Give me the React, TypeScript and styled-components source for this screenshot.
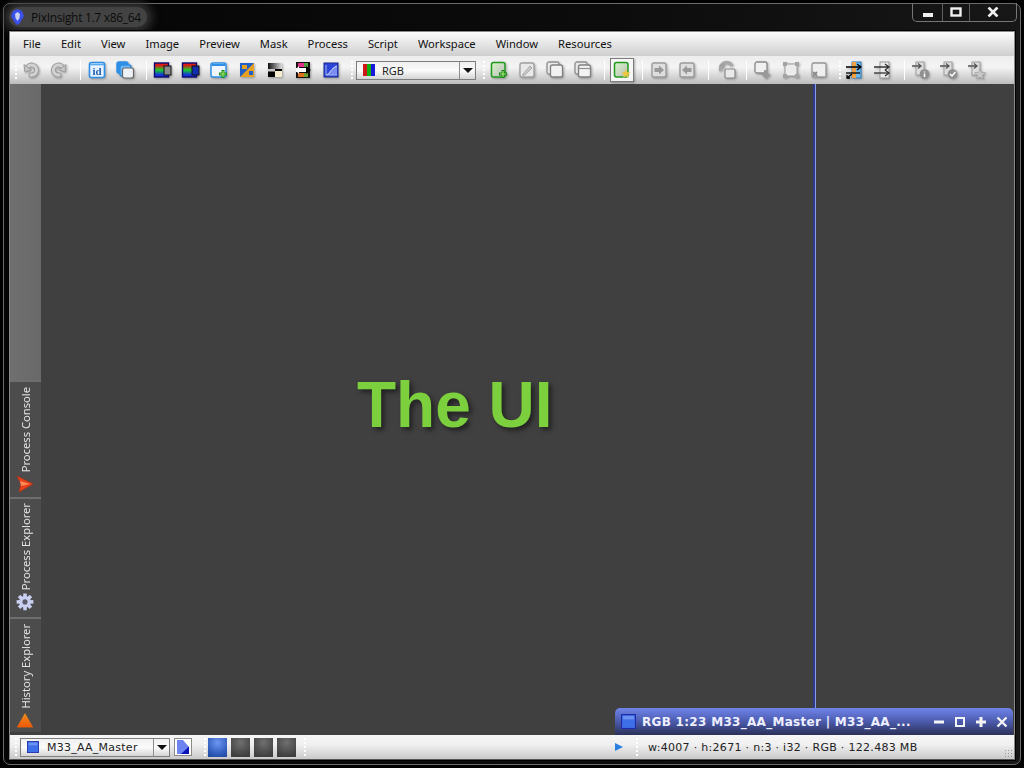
import React from 'react';
import styled, { createGlobalStyle } from 'styled-components';

const GlobalStyle = createGlobalStyle`
    html, body {
        margin: 0;
        width: 1024px;
        height: 768px;
        overflow: hidden;
        background: #000;
    }
    * { box-sizing: border-box; }
`;

// Aero window frame
const Screen = styled.div`
    width: 1024px;
    height: 768px;
    padding: 3px;
    background: #000;
    font-family: "Open Sans", "Noto Sans", sans-serif;
`;

const Frame = styled.div`
    height: 762px;
    display: flex;
    flex-direction: column;
    border: 1px solid #6c6c6c;
    border-radius: 7px;
    padding: 0 5px 4px 5px;
    background: linear-gradient(90deg, #050505, #0c0c0c 60%, #171717);
`;

const TitleBar = styled.div`
    height: 27px;
    flex: none;
    display: flex;
    align-items: flex-start;
    justify-content: space-between;
`;

const TitleLeft = styled.div`
    display: flex;
    align-items: center;
    gap: 7px;
    height: 20px;
    margin-top: 3px;
    padding: 0 6px 0 2px;
    border-radius: 10px;
    background: #434343;
    box-shadow: 0 0 10px 5px #363636;
`;

const TitleText = styled.span`
    font-size: 12px;
    color: #0c0c0c;
    letter-spacing: -0.3px;
`;

const CaptionButtons = styled.div`
    display: flex;
    height: 19px;
    margin-top: -1px;
    margin-right: -2px;
    border: 1px solid #767676;
    border-top: none;
    border-radius: 0 0 5px 5px;
`;

const CaptionButton = styled.div<{ $w: number }>`
    width: ${p => p.$w}px;
    display: flex;
    align-items: center;
    justify-content: center;
    border-left: 1px solid #5f5f5f;
    &:first-child { border-left: none; }
`;

const Client = styled.div`
    flex: 1;
    min-height: 0;
    display: flex;
    flex-direction: column;
    border: 1px solid #8a8a8a;
    border-bottom-color: #555;
    outline: 1px solid #000;
    background: #404040;
`;

const MenuBar = styled.div`
    height: 24px;
    flex: none;
    display: flex;
    align-items: center;
    gap: 20px;
    padding: 0 0 2px 13px;
    background: linear-gradient(#fbfbfb, #cfcfcf);
`;

const MenuItem = styled.span`
    font-family: "Noto Sans", sans-serif;
    font-size: 11.2px;
    color: #111;
`;

const ToolBar = styled.div`
    height: 28px;
    flex: none;
    display: flex;
    align-items: center;
    padding-left: 1px;
    background: linear-gradient(#ededed, #f4f4f4 40%, #bdbdbd);
`;

const Grip = styled.div<{ $ml?: number; $mr?: number }>`
    width: 2px;
    height: 19px;
    flex: none;
    margin-left: ${p => p.$ml ?? 4}px;
    margin-right: ${p => p.$mr ?? 0}px;
    background: repeating-linear-gradient(#fff 0 2px, transparent 2px 4px);
`;

const Sep = styled.div<{ $ml?: number; $mr?: number }>`
    width: 1px;
    height: 20px;
    flex: none;
    margin-left: ${p => p.$ml ?? 7}px;
    margin-right: ${p => p.$mr ?? 2}px;
    background: #fff;
`;

const ToolIcon = styled.div<{ $active?: boolean }>`
    width: 28px;
    height: 24px;
    flex: none;
    display: flex;
    align-items: center;
    justify-content: center;
    filter: drop-shadow(1px 1px 1px rgba(0, 0, 0, 0.3));
    ${p => p.$active && `
        width: 24px;
        background: #f6f6f6;
        border: 1px solid #7c7c7c;
    `}
`;

const Combo = styled.div<{ $w: number; $arrow: number }>`
    width: ${p => p.$w}px;
    height: 19px;
    flex: none;
    display: grid;
    grid-template-columns: 1fr ${p => p.$arrow}px;
    border: 1px solid #7d7d7d;
    background: linear-gradient(#f0f0f0, #fbfbfb 50%, #d4d4d4);
`;

const ComboLabel = styled.div<{ $gap: number; $view?: boolean }>`
    display: flex;
    align-items: center;
    gap: ${p => p.$gap}px;
    padding-left: 6px;
    font-family: ${p => (p.$view ? '"DejaVu Sans"' : '"Noto Sans"')}, sans-serif;
    font-size: 11px;
    letter-spacing: ${p => (p.$view ? '0.25px' : '0')};
    color: #222;
`;

const ComboArrow = styled.div`
    display: flex;
    align-items: center;
    justify-content: center;
    border-left: 1px solid #8d8d8d;
    &::after {
        content: '';
        border-left: 5px solid transparent;
        border-right: 5px solid transparent;
        border-top: 5px solid #111;
    }
`;

const Middle = styled.div`
    flex: 1;
    min-height: 0;
    display: flex;
    position: relative;
`;

const SideBar = styled.div`
    width: 31px;
    flex: none;
    display: flex;
    flex-direction: column;
    padding-bottom: 3px;
    background: #404040;
`;

const SideFill = styled.div`
    flex: 1;
    background: linear-gradient(90deg, #6f6f6f, #696969);
`;

const SideTab = styled.div<{ $h: number; $pb: number }>`
    height: ${p => p.$h}px;
    flex: none;
    display: flex;
    flex-direction: column-reverse;
    align-items: center;
    gap: 3px;
    padding: 4px 1px ${p => p.$pb}px 0;
    background: #4c4c4c;
    border-top: 2px solid #6e6e6e;
    &:first-of-type { border-top: none; }
`;

const SideLabel = styled.span`
    writing-mode: vertical-rl;
    transform: rotate(180deg);
    white-space: nowrap;
    font-family: "Noto Sans", sans-serif;
    font-size: 11.2px;
    line-height: 14px;
    margin-left: 1px;
    color: #e4e4e4;
`;

const Workspace = styled.div`
    flex: 1;
    padding: 285px 0 0 316px;
    background: #404040;
`;

const Headline = styled.h1`
    margin: 0;
    font-family: "Liberation Sans", Arial, sans-serif;
    font-size: 64px;
    line-height: 72px;
    font-weight: 700;
    color: #7cd03e;
    text-shadow: 3px 3px 5px rgba(0, 0, 0, 0.5);
`;

const GuideLine = styled.div`
    position: absolute;
    left: 803px;
    top: 0;
    bottom: 27px;
    width: 3px;
    background: linear-gradient(90deg, #2c3c8c 0 2px, #8d9be6 2px);
`;

const ViewTitle = styled.div`
    position: absolute;
    right: 1px;
    bottom: 0;
    width: 398px;
    height: 27px;
    display: flex;
    align-items: center;
    padding: 0 4px 0 6px;
    border-radius: 5px 5px 0 0;
    background: linear-gradient(#7185ea, #4f5fb4 45%, #2b3158);
`;

const ViewName = styled.span`
    flex: 1;
    margin-left: 6px;
    font-family: "DejaVu Sans", sans-serif;
    font-size: 12px;
    font-weight: 700;
    letter-spacing: 0.3px;
    color: #eef0ff;
    white-space: nowrap;
`;

const ViewButtons = styled.div`
    display: flex;
    gap: 7px;
`;

const StatusBar = styled.div`
    height: 24px;
    flex: none;
    display: flex;
    align-items: center;
    padding-left: 1px;
    position: relative;
    background: linear-gradient(#f6f6f6, #f0f0f0 40%, #c9c9c9);
`;

const ViewMode = styled.div<{ $on?: boolean }>`
    width: 19px;
    height: 19px;
    flex: none;
    margin-right: 4px;
    background: ${p => p.$on
        ? 'radial-gradient(circle at 50% 25%, #6f97f2, #2c58b8 70%, #24479a)'
        : 'radial-gradient(circle at 50% 25%, #6f6f6f, #3f3f3f 80%)'};
`;

const SquareButton = styled.div`
    width: 18px;
    height: 18px;
    flex: none;
    margin-left: 4px;
    display: flex;
    align-items: center;
    justify-content: center;
    background: #fff;
    border: 1px solid #8a8a8a;
`;

const StatusRight = styled.div`
    margin-left: auto;
    width: 398px;
    display: flex;
    align-items: center;
`;

const StatusText = styled.span`
    font-family: "DejaVu Sans", sans-serif;
    font-size: 11px;
    letter-spacing: 0.3px;
    color: #222;
    margin-left: 10px;
    white-space: nowrap;
`;

const PlayArrow = styled.div`
    width: 0;
    height: 0;
    margin-left: -1px;
    margin-right: 10px;
    border-top: 4px solid transparent;
    border-bottom: 4px solid transparent;
    border-left: 8px solid #2a7fe0;
`;

const ResizeGrip = styled.div`
    position: absolute;
    right: 1px;
    bottom: 1px;
    width: 9px;
    height: 9px;
    background: radial-gradient(circle, #9a9a9a 1px, transparent 1px) 0 0 / 3px 3px;
`;

// ---- icon drawings ----
const Svg = ({ children, size = 20 }: { children: React.ReactNode; size?: number }) => (
    <svg width={size} height={size} viewBox="0 0 20 20">{children}</svg>
);

const AppLogo = () => (
    <svg width="13" height="16" viewBox="0 0 13 16">
        <path d="M6.5 0 L11 2 L13 7 L9 14 L6.5 16 L4 14 L0 7 L2 2 Z" fill="#3a50e8" />
        <path d="M6.5 3 L9 5 L8.5 9 L6.5 12 L4.5 9 L4 5 Z" fill="#c8d2f4" />
    </svg>
);

const Undo = ({ flip }: { flip?: boolean }) => (
    <Svg>
        <g transform={flip ? 'translate(20,0) scale(-1,1)' : undefined} fill="none" strokeLinecap="round">
            <path d="M6 8 A5 5 0 1 1 10 15" stroke="#9c9c9c" strokeWidth="5" />
            <path d="M6 8 A5 5 0 1 1 10 15" stroke="#d2d2d2" strokeWidth="3" />
            <path d="M3 5 L4 12 L10 10 Z" fill="#c4c4c4" stroke="#9c9c9c" />
        </g>
    </Svg>
);

const IdIcon = () => (
    <Svg>
        <rect x="2.5" y="2.5" width="15" height="15" rx="2" fill="#e8f3ff" stroke="#2f8fe6" strokeWidth="1.6" />
        <path d="M3 4.5 H17" stroke="#5aaaf0" strokeWidth="1.6" />
        <text x="10" y="15" textAnchor="middle" fontFamily="Liberation Serif, serif" fontSize="11" fontWeight="700" fill="#1f5fb0">id</text>
    </Svg>
);

const Windows = () => (
    <Svg>
        <rect x="2" y="2" width="11" height="11" rx="2" fill="#2f8fe6" stroke="#2f8fe6" strokeWidth="1.5" />
        <rect x="5" y="5" width="11" height="11" rx="2" fill="#6fb8f4" stroke="#2f8fe6" strokeWidth="1.5" />
        <rect x="7.5" y="8" width="11" height="10" rx="2" fill="#eef2f6" stroke="#666" strokeWidth="1.2" />
    </Svg>
);

const Channels = ({ tail }: { tail: string }) => (
    <Svg>
        <defs>
            <linearGradient id="rg" x1="0" y1="0" x2="0" y2="1">
                <stop offset="0.15" stopColor="#e01818" />
                <stop offset="0.5" stopColor="#18d028" />
                <stop offset="0.85" stopColor="#1830e0" />
            </linearGradient>
        </defs>
        <rect x="1.5" y="3" width="14" height="14" fill="url(#rg)" stroke="#0a0a70" strokeWidth="1.4" />
        <rect x="11" y="6" width="7" height="9" fill={tail} stroke="#111" />
    </Svg>
);

const NewPreview = () => (
    <Svg>
        <rect x="2" y="3" width="15" height="14" rx="2" fill="#eef5fc" stroke="#2f8fe6" strokeWidth="1.5" />
        <path d="M3 5 H16" stroke="#2f8fe6" strokeWidth="2" />
        <path d="M14 10 V18 M10 14 H18" stroke="#168a16" strokeWidth="3" />
        <path d="M14 11 V17 M11 14 H17" stroke="#9be86b" strokeWidth="1.2" />
    </Svg>
);

const Transfer = () => (
    <Svg>
        <rect x="3" y="3" width="14" height="14" fill="#1f5fc8" />
        <path d="M3 17 L17 3 V17 Z" fill="#e8a020" />
        <path d="M5 5 H10 V9 H5 Z" fill="#e8a020" />
        <path d="M12 11 H16 V15 H12 Z" fill="#1f5fc8" />
    </Svg>
);

const BlackWhite = () => (
    <Svg>
        <defs>
            <linearGradient id="bw" x1="0" y1="0" x2="1" y2="0">
                <stop offset="0" stopColor="#111" />
                <stop offset="1" stopColor="#ddd" />
            </linearGradient>
        </defs>
        <rect x="3" y="3" width="14" height="14" fill="#000" />
        <rect x="3" y="3" width="14" height="6" fill="url(#bw)" />
        <rect x="3" y="9" width="7" height="2.5" fill="#c8c8c8" />
        <rect x="10" y="11" width="7" height="6" fill="#f6ecd0" />
    </Svg>
);

const Histogram = () => (
    <Svg>
        <rect x="3" y="2" width="14" height="16" fill="#111" />
        <rect x="5" y="3" width="6" height="4" fill="#e0308a" />
        <rect x="11" y="3" width="4" height="4" fill="#50a040" />
        <rect x="5" y="13" width="6" height="4" fill="#e07020" />
        <rect x="11" y="13" width="4" height="4" fill="#70a030" />
        <rect x="3" y="8" width="11" height="4" fill="#fff" />
        <path d="M6 6 L2 10 L6 14 Z" fill="#fff" />
        <path d="M13 6 L18 10 L13 14 Z" fill="#000" />
    </Svg>
);

const Curve = () => (
    <Svg>
        <rect x="3" y="3" width="14" height="14" fill="#2a45d8" stroke="#182a90" />
        <path d="M5 15 C9 14 10 8 16 6 V15 Z" fill="#7a8cf0" />
        <path d="M5 15 C9 14 10 8 16 6" stroke="#d8defa" fill="none" />
        <path d="M5 5 V15 H16" stroke="#a8b4f4" fill="none" />
    </Svg>
);

const RgbSwatch = () => (
    <svg width="12" height="12" viewBox="0 0 12 12">
        <rect width="4" height="12" fill="#d01818" />
        <rect x="4" width="4" height="12" fill="#10b010" />
        <rect x="8" width="4" height="12" fill="#1818d8" />
    </svg>
);

const GreenNew = ({ star }: { star?: boolean }) => (
    <Svg>
        <defs>
            <linearGradient id="gn" x1="0" y1="0" x2="1" y2="1">
                <stop offset="0" stopColor="#d8f5c8" />
                <stop offset="1" stopColor="#bcbcbc" />
            </linearGradient>
        </defs>
        <rect x="2.5" y="2.5" width="13.5" height="14.5" rx="2" fill="url(#gn)" stroke="#1f9a1f" strokeWidth="1.5" />
        {star
            ? <path d="M14 9 L15.4 12 L18.5 12.4 L16.2 14.5 L16.9 17.8 L14 16.2 L11.1 17.8 L11.8 14.5 L9.5 12.4 L12.6 12 Z" fill="#ecc640" />
            : <>
                <path d="M14 10 V18 M10 14 H18" stroke="#148214" strokeWidth="3" />
                <path d="M14 11 V17 M11 14 H17" stroke="#a8ec78" strokeWidth="1.2" />
            </>}
    </Svg>
);

const Edit = () => (
    <Svg>
        <rect x="3" y="3" width="14" height="14" rx="2" fill="#e8e8e8" stroke="#a0a0a0" strokeWidth="1.4" />
        <path d="M6 14 L13 6 L15 8 L8 15 L5.5 15.5 Z" fill="#c8c8c8" stroke="#9a9a9a" strokeWidth="0.7" />
    </Svg>
);

const Stack = ({ bar }: { bar?: boolean }) => (
    <Svg>
        <rect x="2" y="2" width="12" height="12" rx="2" fill="#e8e8e8" stroke="#909090" strokeWidth="1.3" />
        <rect x="5.5" y="5" width="12" height="12" rx="2" fill="#f2f2f2" stroke="#808080" strokeWidth="1.3" />
        {bar && <path d="M6 8.5 H17" stroke="#909090" strokeWidth="1.2" />}
    </Svg>
);

const ArrowBox = ({ flip }: { flip?: boolean }) => (
    <Svg>
        <g transform={flip ? undefined : 'translate(20,0) scale(-1,1)'}>
            <rect x="3" y="3" width="14" height="14" rx="2" fill="#dedede" stroke="#9c9c9c" strokeWidth="1.4" />
            <path d="M5.5 8 H10 V5.5 L15 10 L10 14.5 V12 H5.5 Z" fill="#999" />
        </g>
    </Svg>
);

const Refresh = () => (
    <Svg>
        <path d="M4 11 A6 6 0 0 1 15 6" fill="none" stroke="#a8a8a8" strokeWidth="3.5" />
        <path d="M2 5 L8 3 L7 9 Z" fill="#a0a0a0" />
        <rect x="8" y="9" width="10" height="9" rx="1.5" fill="#e8e8e8" stroke="#8a8a8a" strokeWidth="1.2" />
    </Svg>
);

const BoxDown = () => (
    <Svg>
        <rect x="2" y="2" width="12" height="11" rx="2" fill="#f0f0f0" stroke="#8a8a8a" strokeWidth="1.3" />
        <path d="M11 10 H15 V14 H18 L13 19 L8 14 H11 Z" fill="#9a9a9a" />
    </Svg>
);

const Corners = () => (
    <Svg>
        <rect x="4" y="4" width="12" height="12" fill="#ececec" stroke="#9a9a9a" />
        <g fill="#a4a4a4">
            <rect x="2" y="2" width="4" height="4" />
            <rect x="14" y="2" width="4" height="4" />
            <rect x="2" y="14" width="4" height="4" />
            <rect x="14" y="14" width="4" height="4" />
        </g>
    </Svg>
);

const BoxCheck = () => (
    <Svg>
        <rect x="3" y="3" width="14" height="14" rx="1.5" fill="#efefef" stroke="#969696" strokeWidth="1.3" />
        <path d="M4 12 L8 16 M8 12 L4 16" stroke="#8a8a8a" strokeWidth="2" />
    </Svg>
);

const IOColor = ({ color }: { color?: boolean }) => (
    <Svg>
        <rect x="7" y="2" width="9" height="16" fill={color ? '#6fb8ec' : '#ececec'} stroke={color ? '#2a78b8' : '#999'} />
        {color && <rect x="7" y="2" width="4" height="16" fill="#f0a040" />}
        <path d="M1 7 H15 M12 4 L16 7 L12 10" fill="none" stroke={color ? '#000' : '#333'} strokeWidth="1.3" />
        <path d="M1 13 H15" stroke={color ? '#000' : '#333'} strokeWidth="1.3" />
        {color
            ? <path d="M7 14 L2 18 M2 15 V18 H5" fill="none" stroke="#000" strokeWidth="1.3" />
            : <path d="M12 10 L16 13 L12 16" fill="none" stroke="#333" strokeWidth="1.3" />}
    </Svg>
);

const ScriptBadge = ({ kind }: { kind: 'info' | 'check' | 'star' }) => (
    <Svg>
        <rect x="5" y="2" width="8" height="13" fill="#dcdcdc" stroke="#a0a0a0" />
        <path d="M1 6 H9 M7 3.5 L10 6 L7 8.5" fill="none" stroke="#555" strokeWidth="1.3" />
        {kind === 'star'
            ? <path d="M13 9 L14.6 12.4 L18.5 12.8 L15.6 15.3 L16.4 19 L13 17.2 L9.6 19 L10.4 15.3 L7.5 12.8 L11.4 12.4 Z" fill="#c8c8c8" stroke="#999" strokeWidth="0.6" />
            : <circle cx="13.5" cy="14" r="4.8" fill="#8f8f8f" />}
        {kind === 'info' && <path d="M13.5 11.5 V12.5 M13.5 13.5 V17" stroke="#fff" strokeWidth="1.5" />}
        {kind === 'check' && <path d="M11 14 L13 16 L16.5 12" fill="none" stroke="#fff" strokeWidth="1.5" />}
    </Svg>
);

const ConsoleArrow = () => (
    <svg width="18" height="18" viewBox="0 0 18 18">
        <path d="M1 1 L17 9 L3 17 L5 9 Z" fill="#e8401c" stroke="#c02808" strokeWidth="0.5" />
        <path d="M4 6 L14 9 L5 11 Z" fill="#ff8a58" />
    </svg>
);

const Gear = () => (
    <svg width="18" height="18" viewBox="0 0 18 18">
        <g fill="#c9cff0">
            <circle cx="9" cy="9" r="6" />
            {[0, 45, 90, 135, 180, 225, 270, 315].map(a => (
                <rect key={a} x="7.2" y="0.5" width="3.6" height="4" transform={`rotate(${a} 9 9)`} />
            ))}
        </g>
        <circle cx="9" cy="9" r="2.6" fill="#59596a" />
    </svg>
);

const HistoryCone = () => (
    <svg width="18" height="17" viewBox="0 0 18 17">
        <defs>
            <linearGradient id="cone" x1="0" y1="0" x2="0" y2="1">
                <stop offset="0" stopColor="#e89020" />
                <stop offset="1" stopColor="#f05808" />
            </linearGradient>
        </defs>
        <path d="M9 1 L17 15 H1 Z" fill="url(#cone)" />
        <path d="M1 15 H17 V16 H1 Z" fill="#8a5a30" />
    </svg>
);

const ViewIcon = ({ size = 14 }: { size?: number }) => (
    <svg width={size} height={size} viewBox="0 0 14 14">
        <rect x="0.5" y="0.5" width="13" height="13" fill="#3f6fe8" stroke="#1d2ca8" />
        <rect x="2" y="2" width="10" height="3" fill="#6f93f0" />
    </svg>
);

const PageIcon = () => (
    <svg width="14" height="14" viewBox="0 0 14 14">
        <path d="M1 0 H7 L13 7 V14 H1 Z" fill="#6d84f0" />
        <path d="M13 6.5 V14 H5 Z" fill="#0a14b8" />
    </svg>
);

const WinGlyph = ({ d, w = 3 }: { d: string; w?: number }) => (
    <svg width="14" height="14" viewBox="0 0 14 14">
        <path d={d} fill="none" stroke="#f4f4f4" strokeWidth={w} />
    </svg>
);

const menus = ['File', 'Edit', 'View', 'Image', 'Preview', 'Mask', 'Process', 'Script', 'Workspace', 'Window', 'Resources'];

export default function App() {
    return (
        <Screen>
            <GlobalStyle />
            <Frame>
                <TitleBar>
                    <TitleLeft>
                        <AppLogo />
                        <TitleText>PixInsight 1.7 x86_64</TitleText>
                    </TitleLeft>
                    <CaptionButtons>
                        <CaptionButton $w={29}><svg width="12" height="12" viewBox="0 0 12 12"><rect x="1" y="7" width="10" height="4" fill="#f0f0f0" /></svg></CaptionButton>
                        <CaptionButton $w={27}><svg width="12" height="10" viewBox="0 0 12 10"><rect x="1.5" y="1.5" width="9" height="7" fill="none" stroke="#f0f0f0" strokeWidth="2.4" /></svg></CaptionButton>
                        <CaptionButton $w={47}><svg width="12" height="10" viewBox="0 0 12 10"><path d="M1.5 0.5 L10.5 9.5 M10.5 0.5 L1.5 9.5" stroke="#f0f0f0" strokeWidth="2.6" /></svg></CaptionButton>
                    </CaptionButtons>
                </TitleBar>
                <Client>
                    <MenuBar>
                        {menus.map(m => <MenuItem key={m}>{m}</MenuItem>)}
                    </MenuBar>
                    <ToolBar>
                        <Grip />
                        <ToolIcon><Undo /></ToolIcon>
                        <ToolIcon><Undo flip /></ToolIcon>
                        <Sep />
                        <ToolIcon><IdIcon /></ToolIcon>
                        <ToolIcon><Windows /></ToolIcon>
                        <Sep />
                        <ToolIcon><Channels tail="#8a8a8a" /></ToolIcon>
                        <ToolIcon><Channels tail="#1030b0" /></ToolIcon>
                        <ToolIcon><NewPreview /></ToolIcon>
                        <ToolIcon><Transfer /></ToolIcon>
                        <ToolIcon><BlackWhite /></ToolIcon>
                        <ToolIcon><Histogram /></ToolIcon>
                        <ToolIcon><Curve /></ToolIcon>
                        <Grip $ml={6} $mr={3} />
                        <Combo $w={120} $arrow={16}>
                            <ComboLabel $gap={7}><RgbSwatch />RGB</ComboLabel>
                            <ComboArrow />
                        </Combo>
                        <Grip $ml={7} />
                        <ToolIcon><GreenNew /></ToolIcon>
                        <ToolIcon><Edit /></ToolIcon>
                        <ToolIcon><Stack /></ToolIcon>
                        <ToolIcon><Stack bar /></ToolIcon>
                        <Sep $mr={5} />
                        <ToolIcon $active><GreenNew star /></ToolIcon>
                        <Sep $ml={8} />
                        <ToolIcon><ArrowBox flip /></ToolIcon>
                        <ToolIcon><ArrowBox /></ToolIcon>
                        <Sep $mr={4} />
                        <ToolIcon><Refresh /></ToolIcon>
                        <Sep $ml={5} />
                        <ToolIcon><BoxDown /></ToolIcon>
                        <ToolIcon><Corners /></ToolIcon>
                        <ToolIcon><BoxCheck /></ToolIcon>
                        <Grip $ml={6} />
                        <ToolIcon><IOColor color /></ToolIcon>
                        <ToolIcon><IOColor /></ToolIcon>
                        <Sep />
                        <ToolIcon><ScriptBadge kind="info" /></ToolIcon>
                        <ToolIcon><ScriptBadge kind="check" /></ToolIcon>
                        <ToolIcon><ScriptBadge kind="star" /></ToolIcon>
                    </ToolBar>
                    <Middle>
                        <SideBar>
                            <SideFill />
                            <SideTab $h={117} $pb={4}><ConsoleArrow /><SideLabel>Process Console</SideLabel></SideTab>
                            <SideTab $h={120} $pb={6}><Gear /><SideLabel>Process Explorer</SideLabel></SideTab>
                            <SideTab $h={115} $pb={3}><HistoryCone /><SideLabel>History Explorer</SideLabel></SideTab>
                        </SideBar>
                        <Workspace>
                            <Headline>The UI</Headline>
                        </Workspace>
                        <GuideLine />
                        <ViewTitle>
                            <ViewIcon size={15} />
                            <ViewName>RGB 1:23 M33_AA_Master | M33_AA_...</ViewName>
                            <ViewButtons>
                                <WinGlyph d="M2 7 H12" />
                                <WinGlyph d="M3 3 H11 V11 H3 Z" w={2} />
                                <WinGlyph d="M7 2 V12 M2 7 H12" />
                                <WinGlyph d="M2.5 2.5 L11.5 11.5 M11.5 2.5 L2.5 11.5" w={2.4} />
                            </ViewButtons>
                        </ViewTitle>
                    </Middle>
                    <StatusBar>
                        <Grip $mr={3} />
                        <Combo $w={150} $arrow={16}>
                            <ComboLabel $gap={8} $view><ViewIcon size={12} />M33_AA_Master</ComboLabel>
                            <ComboArrow />
                        </Combo>
                        <SquareButton><PageIcon /></SquareButton>
                        <Grip $ml={12} $mr={2} />
                        <ViewMode $on />
                        <ViewMode />
                        <ViewMode />
                        <ViewMode />
                        <Grip />
                        <StatusRight>
                            <PlayArrow />
                            <Grip $ml={3} />
                            <StatusText>w:4007 · h:2671 · n:3 · i32 · RGB · 122.483 MB</StatusText>
                        </StatusRight>
                        <ResizeGrip />
                    </StatusBar>
                </Client>
            </Frame>
        </Screen>
    );
}
